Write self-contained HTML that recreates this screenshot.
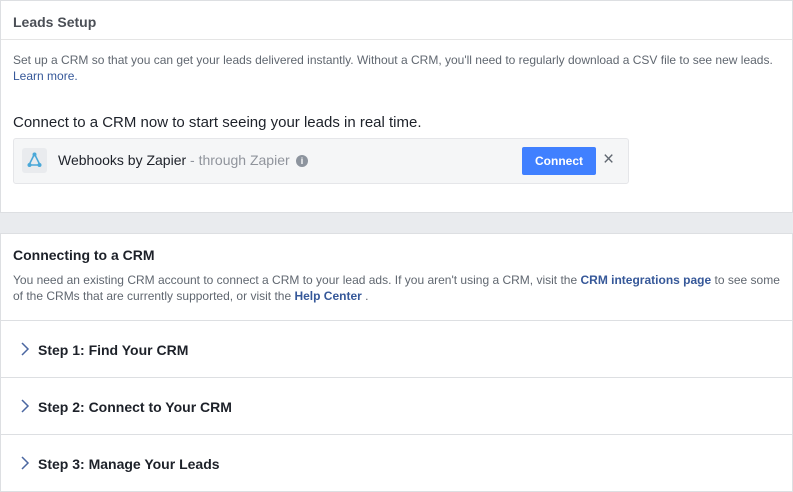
<!DOCTYPE html>
<html><head><style>
*{margin:0;padding:0;box-sizing:border-box}
body{width:793px;height:492px;background:#e9ebee;font-family:"Liberation Sans",Arial,sans-serif;position:relative;overflow:hidden}
.card{position:absolute;left:0;width:793px;background:#fff;border:1px solid #dddfe2}
.abs{position:absolute;white-space:nowrap}
.g{color:#606770;font-size:12px}
.b{color:#365899}
.step{position:absolute;left:0;width:791px;height:57px;border-top:1px solid #dddfe2}
.step span{position:absolute;left:37px;top:21px;font-size:14px;font-weight:bold;color:#1d2129}
.step svg{position:absolute;left:19px;top:21px}
</style></head><body>
<div class="card" style="top:0;height:213px;border-top-color:#dddfe2">
  <div class="abs" style="left:12px;top:13px;font-size:14px;font-weight:bold;color:#4b4f56">Leads Setup</div>
  <div style="position:absolute;left:0;top:38px;width:791px;border-top:1px solid #e5e5e5"></div>
  <div class="abs g" style="left:12px;top:52px">Set up a CRM so that you can get your leads delivered instantly. Without a CRM, you'll need to regularly download a CSV file to see new leads.</div>
  <div class="abs b" style="left:12px;top:68px;font-size:12px">Learn more.</div>
  <div class="abs" style="left:12px;top:113px;font-size:15px;color:#1d2129">Connect to a CRM now to start seeing your leads in real time.</div>
  <div style="position:absolute;left:12px;top:137px;width:616px;height:46px;background:#f5f6f7;border:1px solid #e5e6e9;border-radius:3px">
    <div style="position:absolute;left:8px;top:9px;width:25px;height:25px;background:#e9ebee;border-radius:3px">
      <svg width="25" height="25" viewBox="0 0 25 25"><path d="M12.5 6 L7 17 L18 17 Z" fill="none" stroke="#4aa8d8" stroke-width="1.6"/><circle cx="12.5" cy="6.5" r="2" fill="#4aa8d8"/><circle cx="7.5" cy="17" r="2" fill="#4aa8d8"/><circle cx="17.5" cy="17" r="2" fill="#4aa8d8"/></svg>
    </div>
    <div class="abs" style="left:44px;top:13px;font-size:14px;color:#1d2129">Webhooks by Zapier <span style="color:#90949c">- through Zapier</span></div>
    <div style="position:absolute;left:282px;top:16px;width:12px;height:12px;border-radius:50%;background:#8d949e;color:#fff;font-size:9px;font-weight:bold;text-align:center;line-height:12px">i</div>
    <div style="position:absolute;left:508px;top:8px;width:74px;height:28px;background:#4080ff;border-radius:2px;color:#fff;font-size:12px;font-weight:bold;text-align:center;line-height:28px">Connect</div>
    <div class="abs" style="left:589px;top:10px;font-size:19px;color:#606770">×</div>
  </div>
</div>
<div class="card" style="top:233px;height:259px">
  <div class="abs" style="left:12px;top:13px;font-size:14px;font-weight:bold;color:#1d2129">Connecting to a CRM</div>
  <div class="abs g" style="left:12px;top:39px">You need an existing CRM account to connect a CRM to your lead ads. If you aren't using a CRM, visit the <b class="b">CRM integrations page</b> to see some</div>
  <div class="abs g" style="left:12px;top:55px">of the CRMs that are currently supported, or visit the <b class="b">Help Center</b> .</div>
  <div class="step" style="top:86px"><svg width="10" height="14"><path d="M2 1 L8 7 L2 13" fill="none" stroke="#4b67a1" stroke-width="1.5"/></svg><span>Step 1: Find Your CRM</span></div>
  <div class="step" style="top:143px"><svg width="10" height="14"><path d="M2 1 L8 7 L2 13" fill="none" stroke="#4b67a1" stroke-width="1.5"/></svg><span>Step 2: Connect to Your CRM</span></div>
  <div class="step" style="top:200px"><svg width="10" height="14"><path d="M2 1 L8 7 L2 13" fill="none" stroke="#4b67a1" stroke-width="1.5"/></svg><span>Step 3: Manage Your Leads</span></div>
</div>
</body></html>
